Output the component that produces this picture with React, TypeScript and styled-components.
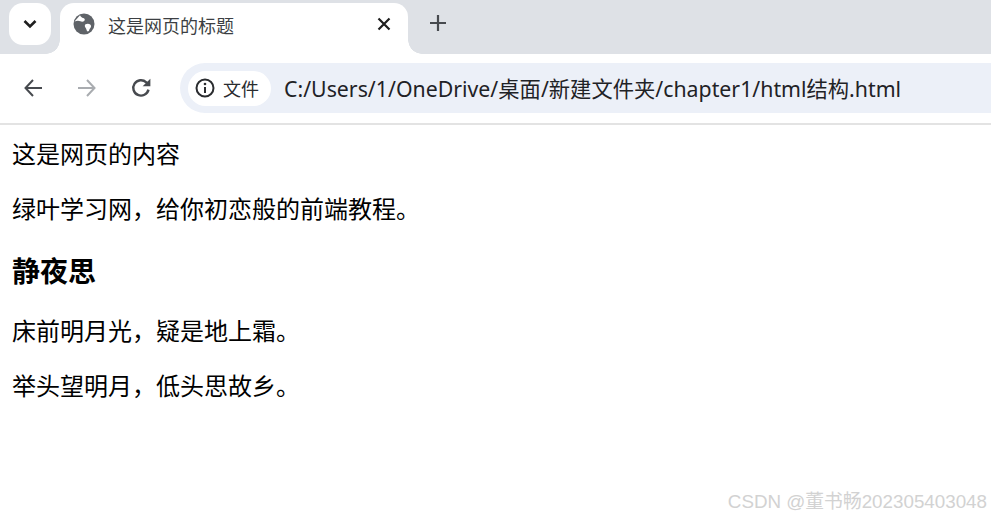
import React from "react";
import styled, { createGlobalStyle } from "styled-components";

const GlobalStyle = createGlobalStyle`
  html, body {
    margin: 0;
    padding: 0;
    background: #fff;
  }
  body {
    font-family: "Noto Sans", "Noto Sans CJK SC", sans-serif;
  }
`;

const Page = styled.div`
  position: relative;
  width: 991px;
  height: 519px;
  overflow: hidden;
  background: #fff;
`;

const TabStrip = styled.div`
  height: 54px;
  box-sizing: border-box;
  background: #dee1e6;
  display: flex;
  align-items: flex-start;
  padding: 3px 0 0 9px;
`;

const MenuButton = styled.div`
  width: 42px;
  height: 42px;
  border-radius: 14px;
  background: #fff;
  display: flex;
  align-items: center;
  justify-content: center;
  color: #1f1f1f;
`;

const Tab = styled.div`
  position: relative;
  width: 348px;
  height: 51px;
  margin-left: 9px;
  box-sizing: border-box;
  background: #fff;
  border-radius: 14px 14px 0 0;
  display: flex;
  align-items: center;
  padding: 0 0 10px 13px;

  &::before,
  &::after {
    content: "";
    position: absolute;
    bottom: 0;
    width: 14px;
    height: 14px;
    background: radial-gradient(circle at var(--cx) 0, transparent 13.5px, #fff 14px);
  }
  &::before {
    --cx: 0;
    left: -14px;
  }
  &::after {
    --cx: 100%;
    right: -14px;
  }
`;

const TabTitle = styled.span`
  flex: 1;
  margin: 4px 0 0 13px;
  font-size: 18px;
  line-height: 24px;
  color: #3c3f43;
`;

const TabClose = styled.div`
  width: 24px;
  height: 24px;
  margin-right: 12px;
  display: flex;
  align-items: center;
  justify-content: center;
  color: #1f1f1f;
`;

const NewTab = styled.div`
  width: 24px;
  height: 24px;
  margin: 8px 0 0 18px;
  display: flex;
  align-items: center;
  justify-content: center;
  color: #474a4f;
`;

const Toolbar = styled.div`
  height: 69px;
  box-sizing: border-box;
  background: #fff;
  border-radius: 14px 0 0 0;
  display: flex;
  align-items: center;
  padding: 0 0 1px 21px;
`;

const NavButton = styled.div<{ $muted?: boolean }>`
  width: 24px;
  height: 24px;
  margin-right: 30px;
  display: flex;
  align-items: center;
  justify-content: center;
  color: ${(p) => (p.$muted ? "#a9acb0" : "#474a4f")};
`;

const Omnibox = styled.div`
  flex: 1;
  height: 50px;
  margin-left: -3px;
  background: #ecf0f8;
  border-radius: 25px 0 0 25px;
  display: flex;
  align-items: center;
  padding-left: 8px;
`;

const SecurityChip = styled.div`
  width: 83px;
  height: 35px;
  box-sizing: border-box;
  border-radius: 18px;
  background: #fff;
  display: flex;
  align-items: center;
  padding-left: 7px;
  gap: 8px;
  font-size: 18px;
  color: #2a2c2f;
`;

const Url = styled.span`
  margin: 0 0 2px 13px;
  font-size: 21.3px;
  color: #1f2226;
  white-space: nowrap;
`;

const Divider = styled.div`
  height: 2px;
  background: #e3e3e3;
`;

const Content = styled.main`
  padding: 12px 12px 0;
  color: #000;
  font-family: "Noto Sans CJK SC", sans-serif;
`;

const Para = styled.p`
  margin: 0 0 23px;
  font-size: 24px;
  line-height: 32px;
`;

const Heading = styled.h3`
  margin: 28px 0 26px;
  font-size: 28px;
  line-height: 36px;
  font-weight: 700;
`;

const Watermark = styled.div`
  position: absolute;
  right: 4px;
  bottom: 6px;
  font-family: "Liberation Sans", "Noto Sans CJK SC", sans-serif;
  font-size: 18.8px;
  line-height: 22px;
  color: #d2d2d2;
`;

const GlobeIcon = () => (
  <svg width="22" height="22" viewBox="0 0 22 22">
    <circle cx="11" cy="11" r="10.500" fill="#5f6368" />
    <path
      d="M7 2.200c.6 1.600 2 2.300 3.200 2.800 1.700.6 2.100 1.700 1 2.900-1 1-2.600.9-3.800.4-1.500-.7-3.500-.7-5.900.2M12.500 11.200c1.700-.9 3.600-.7 4.700.3 1 .9 1.100 2.200.3 3.200-.8 1-1.400 2-1.600 3.300-1.200.8-2.100.3-2.300-.9-.2-1.100-.6-1.800-1.200-2.600-.8-1.300-.8-2.600.1-3.300Z"
      fill="#fff"
    />
    <path d="M5.600 12.500c1.500-.3 2.800.5 3.300 1.800.4 1 .2 2.600-.2 4.500-2.900-1-4.900-3.200-5.700-5.900.9-.2 1.700-.3 2.600-.4Z" fill="#5f6368" />
  </svg>
);

const ChevronIcon = () => (
  <svg width="16" height="16" viewBox="0 0 16 16" fill="none" stroke="currentColor" strokeWidth="2.600">
    <path d="M2.500 5 8 10.500 13.500 5" />
  </svg>
);

const CloseIcon = () => (
  <svg width="14" height="14" viewBox="0 0 14 14" fill="none" stroke="currentColor" strokeWidth="2.200">
    <path d="M1.500 1.500 12.500 12.500M12.500 1.500 1.500 12.500" />
  </svg>
);

const PlusIcon = () => (
  <svg width="18" height="18" viewBox="0 0 18 18" fill="none" stroke="currentColor" strokeWidth="2.200">
    <path d="M9 1V17M1 9H17" />
  </svg>
);

const BackIcon = () => (
  <svg width="20" height="20" viewBox="0 0 20 20" fill="none" stroke="currentColor" strokeWidth="2">
    <path d="M19 10H2.500M10 2 2.500 10 10 18" />
  </svg>
);

const ForwardIcon = () => (
  <svg width="20" height="20" viewBox="0 0 20 20" fill="none" stroke="currentColor" strokeWidth="2">
    <path d="M1 10H17.500M10 2 17.500 10 10 18" />
  </svg>
);

const ReloadIcon = () => (
  <svg width="22" height="22" viewBox="0 0 20 20" fill="none" stroke="currentColor" strokeWidth="2.200">
    <path d="M16.800 11.500A7 7 0 1 1 14.800 4.800L17 7" />
    <path d="M18.500 1.500V8.500H11.500Z" fill="currentColor" stroke="none" />
  </svg>
);

const InfoIcon = () => (
  <svg width="20" height="20" viewBox="0 0 20 20" fill="none" stroke="currentColor" strokeWidth="2">
    <circle cx="10" cy="10" r="8.500" />
    <path d="M10 9V15" />
    <circle cx="10" cy="6" r="1.300" fill="currentColor" stroke="none" />
  </svg>
);

export default function App() {
  return (
    <Page>
      <GlobalStyle />
      <TabStrip>
        <MenuButton>
          <ChevronIcon />
        </MenuButton>
        <Tab>
          <GlobeIcon />
          <TabTitle>这是网页的标题</TabTitle>
          <TabClose>
            <CloseIcon />
          </TabClose>
        </Tab>
        <NewTab>
          <PlusIcon />
        </NewTab>
      </TabStrip>
      <Toolbar>
        <NavButton>
          <BackIcon />
        </NavButton>
        <NavButton $muted>
          <ForwardIcon />
        </NavButton>
        <NavButton>
          <ReloadIcon />
        </NavButton>
        <Omnibox>
          <SecurityChip>
            <InfoIcon />
            文件
          </SecurityChip>
          <Url>C:/Users/1/OneDrive/桌面/新建文件夹/chapter1/html结构.html</Url>
        </Omnibox>
      </Toolbar>
      <Divider />
      <Content>
        <Para>这是网页的内容</Para>
        <Para>绿叶学习网，给你初恋般的前端教程。</Para>
        <Heading>静夜思</Heading>
        <Para>床前明月光，疑是地上霜。</Para>
        <Para>举头望明月，低头思故乡。</Para>
      </Content>
      <Watermark>CSDN @董书畅202305403048</Watermark>
    </Page>
  );
}
